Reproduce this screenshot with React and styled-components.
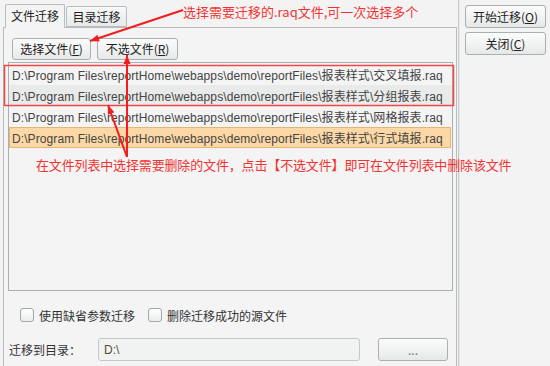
import React from 'react';
import styled, { createGlobalStyle } from 'styled-components';

const Global = createGlobalStyle`
  html, body { margin: 0; padding: 0; }
  body {
    width: 550px; height: 366px; overflow: hidden; background: #f2f3f2;
    font-family: "Liberation Sans", "Noto Sans CJK SC", sans-serif;
  }
`;

const Page = styled.div`
  position: relative;
  width: 550px;
  height: 366px;
  display: flex;
  background: #f2f3f2;
  overflow: hidden;
  color: #2a2a2a;
  font-size: 12px;
`;

const LeftCol = styled.div`
  width: 454px;
  padding: 4px 1px 0 3px;
  display: flex;
  flex-direction: column;
`;

const RightCol = styled.div`
  flex: 1;
  border-left: 1px solid #c6cbcd;
  box-shadow: inset 1px 0 0 #e6e9e9;
  padding: 5px 0 0 6px;
  display: flex;
  flex-direction: column;
  gap: 4px;
`;

const TabBar = styled.div`
  display: flex;
  align-items: flex-end;
  gap: 1px;
  padding-left: 2px;
  height: 23px;
  position: relative;
  z-index: 1;
`;

const Tab = styled.div`
  box-sizing: border-box;
  width: ${p => (p.$active ? 60 : 61)}px;
  height: ${p => (p.$active ? 24 : 21)}px;
  margin-bottom: ${p => (p.$active ? -1 : 0)}px;
  border: 1px solid #b6bcbf;
  border-bottom: ${p => (p.$active ? 'none' : '1px solid #b6bcbf')};
  border-radius: 2px 2px 0 0;
  background: ${p => (p.$active ? '#f3f4f3' : 'linear-gradient(#f7f8f8, #e8eaea)')};
  display: flex;
  align-items: ${p => (p.$active ? 'flex-start' : 'center')};
  padding-top: ${p => (p.$active ? 3 : 0)}px;
  justify-content: center;
  font-family: "Noto Sans CJK SC", sans-serif;
  font-size: 12px;
  line-height: 16px;
  color: #222;
`;

const Panel = styled.div`
  flex: 1;
  border: 1px solid #b6bcbf;
  border-bottom: none;
  background: #f3f4f3;
  padding: 10px 3px 0 4px;
  display: flex;
  flex-direction: column;
`;

const ButtonRow = styled.div`
  display: flex;
  gap: 6px;
  padding-left: 4px;
`;

const Button = styled.button`
  box-sizing: border-box;
  width: ${p => p.$w}px;
  height: ${p => p.$h || 22}px;
  padding: 0;
  border: 1px solid #a9b0b2;
  border-radius: 3px;
  background: linear-gradient(#fbfbfb 0%, #f1f2f2 55%, #e6e8e8 100%);
  font-family: "Noto Sans CJK SC", sans-serif;
  font-size: 12px;
  color: ${p => (p.$faint ? '#777' : '#222')};
  display: flex;
  align-items: center;
  justify-content: center;
  line-height: 1;
`;

const Key = styled.span`
  text-decoration: underline;
  text-underline-offset: 1px;
`;

const List = styled.div`
  margin-top: 2px;
  height: 226px;
  border: 1px solid #a9b0b3;
  padding-top: 1px;
  display: flex;
  flex-direction: column;
`;

const Row = styled.div`
  box-sizing: border-box;
  height: 21px;
  padding-left: 2px;
  display: flex;
  align-items: center;
  font-family: "Liberation Sans", "Noto Sans CJK SC", sans-serif;
  font-size: 12px;
  letter-spacing: 0.09px;
  color: #444;
  white-space: nowrap;
  background: ${p => (p.$kind === 'sel' ? '#fcd8a6' : p.$kind === 'gray' ? '#e9eaea' : 'transparent')};
  border: 1px solid ${p => (p.$kind === 'sel' ? '#e3b676' : 'transparent')};
  margin: 0 ${p => (p.$kind === 'sel' ? 1 : 0)}px 0 0;
`;

const CheckRow = styled.div`
  margin-top: 17px;
  padding-left: 12px;
  display: flex;
  align-items: center;
  height: 14px;
`;

const CheckItem = styled.label`
  display: flex;
  align-items: center;
  gap: 5px;
  margin-right: 13px;
  font-family: "Noto Sans CJK SC", sans-serif;
  font-size: 12px;
  color: #333;
`;

const Box = styled.span`
  box-sizing: border-box;
  width: 14px;
  height: 14px;
  border: 1px solid #a2a8aa;
  border-radius: 3px;
  background: linear-gradient(#fdfdfd, #eceeee);
`;

const DirRow = styled.div`
  margin-top: 16px;
  display: flex;
  align-items: center;
  height: 23px;
`;

const DirLabel = styled.span`
  width: 89px;
  padding-left: 1px;
  font-family: "Noto Sans CJK SC", sans-serif;
  font-size: 12px;
  color: #333;
`;

const Input = styled.div`
  box-sizing: border-box;
  width: 262px;
  height: 23px;
  border: 1px solid #c3c8ca;
  border-radius: 3px;
  background: #f1f2f2;
  padding-left: 5px;
  display: flex;
  align-items: center;
  font-size: 12px;
  color: #5b4a36;
  margin-right: 18px;
`;

const Layer = styled.div`
  position: absolute;
  inset: 0;
  pointer-events: none;
`;

const Note = styled.div`
  position: absolute;
  left: ${p => p.$x}px;
  top: ${p => p.$y}px;
  color: #f23333;
  font-family: "Noto Sans CJK SC", sans-serif;
  font-size: 13px;
  line-height: 16px;
  white-space: nowrap;
  letter-spacing: ${p => p.$ls || 0}px;
`;

function head(x1, y1, x2, y2) {
  const dx = x2 - x1, dy = y2 - y1;
  const l = Math.hypot(dx, dy);
  const ux = dx / l, uy = dy / l;
  const L = 9, W = 3.5;
  const bx = x2 - ux * L, by = y2 - uy * L;
  return `${x2},${y2} ${bx - uy * W},${by + ux * W} ${bx + uy * W},${by - ux * W}`;
}

function Arrow({ x1, y1, x2, y2 }) {
  return (
    <g>
      <line x1={x1} y1={y1} x2={x2} y2={y2} stroke="#f01e1e" strokeWidth="2" />
      <polygon points={head(x1, y1, x2, y2)} fill="#f01e1e" />
    </g>
  );
}

const files = [
  ['D:\\Program Files\\reportHome\\webapps\\demo\\reportFiles\\报表样式\\交叉填报.raq', ''],
  ['D:\\Program Files\\reportHome\\webapps\\demo\\reportFiles\\报表样式\\分组报表.raq', 'gray'],
  ['D:\\Program Files\\reportHome\\webapps\\demo\\reportFiles\\报表样式\\网格报表.raq', ''],
  ['D:\\Program Files\\reportHome\\webapps\\demo\\reportFiles\\报表样式\\行式填报.raq', 'sel'],
];

export default function App() {
  return (
    <Page>
      <Global />
      <LeftCol>
        <TabBar>
          <Tab $active>文件迁移</Tab>
          <Tab>目录迁移</Tab>
        </TabBar>
        <Panel>
          <ButtonRow>
            <Button $w={79}>选择文件(<Key>F</Key>)</Button>
            <Button $w={81}>不选文件(<Key>R</Key>)</Button>
          </ButtonRow>
          <List>
            {files.map(([t, k], i) => (
              <Row key={i} $kind={k}>{t}</Row>
            ))}
          </List>
          <CheckRow>
            <CheckItem><Box />使用缺省参数迁移</CheckItem>
            <CheckItem><Box />删除迁移成功的源文件</CheckItem>
          </CheckRow>
          <DirRow>
            <DirLabel>迁移到目录：</DirLabel>
            <Input>D:\</Input>
            <Button $w={70} $h={23} $faint>...</Button>
          </DirRow>
        </Panel>
      </LeftCol>
      <RightCol>
        <Button $w={81} $h={23}>开始迁移(<Key>O</Key>)</Button>
        <Button $w={81} $h={23}>关闭(<Key>C</Key>)</Button>
      </RightCol>
      <Layer>
        <svg width="550" height="366" style={{ position: 'absolute', left: 0, top: 0 }}>
          <rect x="4.5" y="65.5" width="449" height="40" fill="none" stroke="#f04848" strokeWidth="1.5" />
          <Arrow x1={183} y1={10} x2={90} y2={41} />
          <Arrow x1={127} y1={157} x2={127} y2={55} />
          <Arrow x1={127} y1={157} x2={108} y2={105} />
        </svg>
        <Note $x={183} $y={4}>选择需要迁移的.raq文件,可一次选择多个</Note>
        <Note $x={36} $y={157} $ls={-0.15}>在文件列表中选择需要删除的文件，点击【不选文件】即可在文件列表中删除该文件</Note>
      </Layer>
    </Page>
  );
}
